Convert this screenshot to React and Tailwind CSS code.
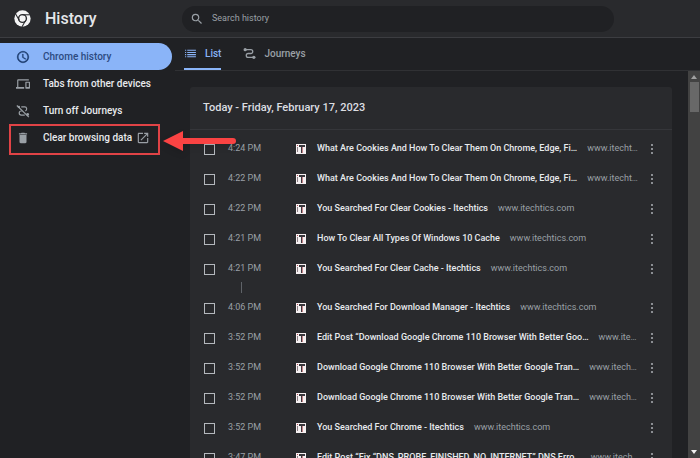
const navItems = [
  { id: 'history', label: 'Chrome history', icon: ClockIcon, active: true },
  { id: 'devices', label: 'Tabs from other devices', icon: DevicesIcon },
  { id: 'journeys', label: 'Turn off Journeys', icon: JourneysOffIcon },
  { id: 'clear', label: 'Clear browsing data', icon: TrashIcon, external: true },
];

const entries = [
  { time: '4:24 PM', title: 'What Are Cookies And How To Clear Them On Chrome, Edge, Fi…', domain: 'www.itecht…' },
  { time: '4:22 PM', title: 'What Are Cookies And How To Clear Them On Chrome, Edge, Fi…', domain: 'www.itecht…' },
  { time: '4:22 PM', title: 'You Searched For Clear Cookies - Itechtics', domain: 'www.itechtics.com' },
  { time: '4:21 PM', title: 'How To Clear All Types Of Windows 10 Cache', domain: 'www.itechtics.com' },
  { time: '4:21 PM', title: 'You Searched For Clear Cache - Itechtics', domain: 'www.itechtics.com', gapAfter: true },
  { time: '4:06 PM', title: 'You Searched For Download Manager - Itechtics', domain: 'www.itechtics.com' },
  { time: '3:52 PM', title: 'Edit Post “Download Google Chrome 110 Browser With Better Goo…', domain: 'www.ite…' },
  { time: '3:52 PM', title: 'Download Google Chrome 110 Browser With Better Google Tran…', domain: 'www.itech…' },
  { time: '3:52 PM', title: 'Download Google Chrome 110 Browser With Better Google Tran…', domain: 'www.itech…' },
  { time: '3:52 PM', title: 'You Searched For Chrome - Itechtics', domain: 'www.itechtics.com' },
  { time: '3:47 PM', title: 'Edit Post “Fix “DNS_PROBE_FINISHED_NO_INTERNET” DNS Erro…', domain: 'www.itech…' },
];

function ChromeLogo() {
  return (
    <svg viewBox="0 0 48 48" className="size-[17px] shrink-0" aria-hidden="true">
      <circle cx="24" cy="24" r="23" fill="#f4f4f5" />
      <g stroke="#292a2d" strokeWidth="3" fill="none">
        <path d="M24 13.5H45.5" />
        <path d="M14.9 29.2L4.2 10.7" />
        <path d="M33.1 29.2L22.4 47.8" />
        <circle cx="24" cy="24" r="11" strokeWidth="4" />
      </g>
    </svg>
  );
}

function ClockIcon() {
  return (
    <svg viewBox="0 0 24 24" className="size-[14px]" fill="currentColor" stroke="currentColor" strokeWidth="0.6" aria-hidden="true">
      <path d="M11.99 2C6.47 2 2 6.48 2 12s4.47 10 9.99 10C17.52 22 22 17.52 22 12S17.52 2 11.99 2zM12 20c-4.42 0-8-3.58-8-8s3.58-8 8-8 8 3.58 8 8-3.58 8-8 8zm.5-13H11v6l5.25 3.15.75-1.23-4.5-2.67z" />
    </svg>
  );
}

function DevicesIcon() {
  return (
    <svg viewBox="0 0 24 24" className="size-[14px]" fill="currentColor" aria-hidden="true">
      <path d="M4 6h18V4H4c-1.1 0-2 .9-2 2v11H0v3h14v-3H4V6zm19 2h-6c-.55 0-1 .45-1 1v10c0 .55.45 1 1 1h6c.55 0 1-.45 1-1V9c0-.55-.45-1-1-1zm-1 9h-4v-7h4v7z" />
    </svg>
  );
}

function JourneysOffIcon() {
  return (
    <svg viewBox="0 0 24 24" className="size-[14px]" fill="none" stroke="currentColor" strokeWidth="2" aria-hidden="true">
      <path d="M1.5 2.5L22 22.5" />
      <path d="M9 5h6a3.5 3.5 0 0 1 1 6.8M10 12H9a3.5 3.5 0 0 0 0 7h6" />
      <circle cx="5" cy="5" r="2" fill="currentColor" stroke="none" />
      <circle cx="20" cy="18" r="2.4" fill="currentColor" stroke="none" />
    </svg>
  );
}

function TrashIcon() {
  return (
    <svg viewBox="0 0 24 24" className="size-[14px]" fill="currentColor" aria-hidden="true">
      <path d="M6 19c0 1.1.9 2 2 2h8c1.1 0 2-.9 2-2V7H6v12zM19 4h-3.5l-1-1h-5l-1 1H5v2h14V4z" />
    </svg>
  );
}

function LaunchIcon() {
  return (
    <svg viewBox="0 0 24 24" className="size-[14px]" fill="currentColor" aria-hidden="true">
      <path d="M19 19H5V5h7V3H5c-1.11 0-2 .9-2 2v14c0 1.1.89 2 2 2h14c1.1 0 2-.9 2-2v-7h-2v7zM14 3v2h3.59l-9.83 9.83 1.41 1.41L19 6.41V10h2V3h-7z" />
    </svg>
  );
}

function SearchIcon() {
  return (
    <svg viewBox="0 0 24 24" className="size-[14px] shrink-0 text-[#9aa0a6]" fill="currentColor" aria-hidden="true">
      <path d="M15.5 14h-.79l-.28-.27A6.471 6.471 0 0 0 16 9.5 6.5 6.5 0 1 0 9.5 16c1.61 0 3.09-.59 4.23-1.57l.27.28v.79l5 4.99L20.49 19l-4.99-5zm-6 0C7.01 14 5 11.99 5 9.5S7.01 5 9.5 5 14 7.01 14 9.5 11.99 14 9.5 14z" />
    </svg>
  );
}

function ListIcon() {
  return (
    <svg viewBox="0 0 24 24" className="size-[13px]" fill="currentColor" aria-hidden="true">
      <path d="M2 5h2v2H2zM2 9h2v2H2zM2 13h2v2H2zM2 17h2v2H2zM6 5h16v2H6zM6 9h16v2H6zM6 13h16v2H6zM6 17h16v2H6z" />
    </svg>
  );
}

function JourneysIcon() {
  return (
    <svg viewBox="0 0 24 24" className="size-[13px]" fill="none" stroke="currentColor" strokeWidth="2.4" aria-hidden="true">
      <path d="M4 5h10.5a3.5 3.5 0 0 1 0 7h-5a3.5 3.5 0 0 0 0 7H20" />
      <circle cx="4" cy="5" r="3" fill="currentColor" stroke="none" />
      <circle cx="20" cy="19" r="3" fill="currentColor" stroke="none" />
    </svg>
  );
}

function SiteIcon() {
  return (
    <svg viewBox="0 0 10 10" className="size-[10px] shrink-0" aria-hidden="true">
      <rect width="10" height="10" fill="#f5f0f1" />
      <path d="M1 1h1v1H1z" fill="#b5454f" />
      <path d="M1 3h1v5H1z" fill="#8d7f84" />
      <path d="M3 1h6v2H3z" fill="#3a383d" />
      <path d="M5 3h1v6H5z" fill="#3a383d" />
      <path d="M6 3h1v6H6z" fill="#c9858b" />
    </svg>
  );
}

function MoreIcon() {
  return (
    <svg viewBox="0 0 4 12" className="h-[12px] w-[4px]" fill="currentColor" aria-hidden="true">
      <circle cx="2" cy="2" r="1.1" />
      <circle cx="2" cy="6" r="1.1" />
      <circle cx="2" cy="10" r="1.1" />
    </svg>
  );
}

function Header() {
  return (
    <header className="flex h-[38px] shrink-0 items-center border-b border-[#3c3d41] bg-[#292a2d]">
      <div className="flex w-[182px] shrink-0 items-center gap-[14px] pl-[14px]">
        <ChromeLogo />
        <h1 className="text-[16px] font-medium text-[#e4e6e9]">History</h1>
      </div>
      <label className="flex h-[26px] w-[460px] max-w-[432px] items-center gap-[8px] rounded-full bg-[#202124] pl-[8px]">
        <SearchIcon />
        <input
          type="text"
          placeholder="Search history"
          aria-label="Search history"
          className="min-w-0 flex-1 bg-transparent text-[9px] text-[#e8eaed] outline-none placeholder:text-[#9aa0a6]"
        />
      </label>
    </header>
  );
}

function Sidebar() {
  return (
    <nav className="w-[175px] shrink-0 pt-[5px]">
      {navItems.map((item) => {
        const Icon = item.icon;
        return (
          <div key={item.id} className="relative">
            <a
              href={`#${item.id}`}
              className={
                item.active
                  ? 'mr-[3px] flex h-[27px] items-center gap-[13px] rounded-r-full bg-[#8ab4f8] pl-[16px] text-[10px] font-medium text-[#2c4a80]'
                  : 'mr-[3px] flex h-[27px] items-center gap-[13px] pl-[16px] text-[10px] font-medium text-[#e8eaed]'
              }
            >
              <span className={item.active ? 'text-[#1b3a6b]' : 'text-[#9aa0a6]'}>
                <Icon />
              </span>
              {item.label}
              {item.external && (
                <span className="-ml-[9px] text-[#9aa0a6]">
                  <LaunchIcon />
                </span>
              )}
            </a>
            {item.external && <Callout />}
          </div>
        );
      })}
    </nav>
  );
}

// red frame and arrow drawn over the "Clear browsing data" item
function Callout() {
  return (
    <>
      <div className="pointer-events-none absolute top-0 left-[9px] h-[31px] w-[151px] border-2 border-[#e04346]" />
      <svg viewBox="0 0 76 24" className="pointer-events-none absolute top-[5px] left-[162px] z-10 h-[24px] w-[76px] drop-shadow-md" aria-hidden="true">
        <path d="M1 12L21 2V9H71A3 3 0 0 1 71 15H21V22Z" fill="#fa4343" />
      </svg>
    </>
  );
}

function Tabs() {
  return (
    <div role="tablist" className="flex h-[33px] shrink-0 gap-[22px] border-b border-[#303134] pl-[9px] text-[10px] font-medium">
      <button role="tab" aria-selected="true" className="flex items-center gap-[8px] border-b-2 border-[#8ab4f8] text-[#8ab4f8]">
        <ListIcon />
        List
      </button>
      <button role="tab" aria-selected="false" className="flex items-center gap-[8px] border-b-2 border-transparent text-[#9aa0a6]">
        <JourneysIcon />
        Journeys
      </button>
    </div>
  );
}

function HistoryRow({ entry }) {
  return (
    <>
      <li className="flex h-[30px] items-center pr-[18px] pl-[14px]">
        <input
          type="checkbox"
          aria-label={entry.title}
          className="size-[11px] shrink-0 appearance-none border border-[#b4b8bd]"
        />
        <span className="ml-[13px] w-[68px] shrink-0 text-[9px] text-[#9aa0a6]">{entry.time}</span>
        <SiteIcon />
        <div className="ml-[11px] flex min-w-0 flex-1 items-center gap-[10px] whitespace-nowrap">
          <a href="#entry" className="text-[9px] font-medium text-[#e8eaed]">{entry.title}</a>
          <span className="text-[9px] text-[#9aa0a6]">{entry.domain}</span>
        </div>
        <button aria-label="Actions" className="shrink-0 text-[#a4a8ad]">
          <MoreIcon />
        </button>
      </li>
      {entry.gapAfter && <li aria-hidden="true" className="-mt-[2px] ml-[51px] h-[11px] w-px bg-[#5f6368]" />}
    </>
  );
}

function HistoryCard() {
  return (
    <section className="min-w-0 flex-1 overflow-hidden rounded-t-[3px] bg-[#292a2d]">
      <h2 className="flex h-[43px] items-center border-b border-[#35363a] pl-[13px] text-[11px] font-medium text-[#dcdee1]">
        Today - Friday, February 17, 2023
      </h2>
      <ul className="pt-[4px]">
        {entries.map((entry, i) => (
          <HistoryRow key={i} entry={entry} />
        ))}
      </ul>
    </section>
  );
}

function Scrollbar() {
  return (
    <div aria-hidden="true" className="flex w-[12px] shrink-0 flex-col items-center bg-[#424242] py-[4px]">
      <svg viewBox="0 0 6 4" className="h-[4px] w-[6px]" fill="#a0a0a0">
        <path d="M0 4L3 0L6 4Z" />
      </svg>
      <div className="mt-[3px] h-[30px] w-[9px] bg-[#686868]" />
      <svg viewBox="0 0 6 4" className="mt-auto h-[4px] w-[6px]" fill="#f1f1f1">
        <path d="M0 0L3 4L6 0Z" />
      </svg>
    </div>
  );
}

export default function App() {
  return (
    <div className="flex h-screen flex-col overflow-hidden bg-[#202124] font-[Roboto,sans-serif]">
      <Header />
      <div className="flex min-h-0 flex-1">
        <Sidebar />
        <main className="flex min-w-0 flex-1 flex-col">
          <Tabs />
          <div className="flex min-h-0 flex-1">
            <div className="flex min-w-0 flex-1 overflow-hidden pt-[16px] pr-[16px] pl-[15px]">
              <HistoryCard />
            </div>
            <Scrollbar />
          </div>
        </main>
      </div>
    </div>
  );
}
